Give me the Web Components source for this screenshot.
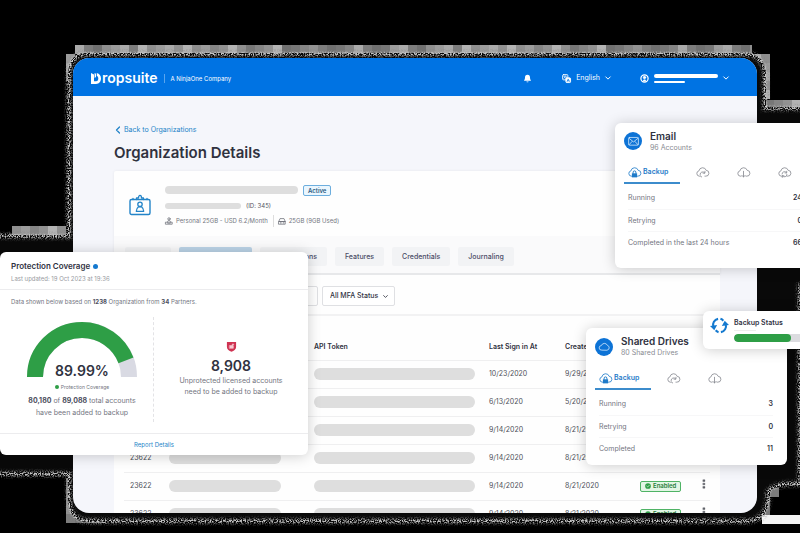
<!DOCTYPE html>
<html lang="en">
<head>
<meta charset="utf-8">
<meta name="viewport" content="width=device-width, initial-scale=1">
<title>Dropsuite – Organization Details</title>
<style>
:root{--blue:#0073e3;--link:#2384c8;--ink:#30323f;--muted:#74767f;--line:#ececee;--bar:#dedede;--green:#2e9e46}
html,body{margin:0;height:100%}
body{background:#000;position:relative;overflow:hidden;font-family:Inter,"Liberation Sans",sans-serif;font-size:7px;line-height:12px;color:var(--ink)}
</style>
</head>
<body>
<ds-desktop>
  <ds-backdrop slot="backdrop"></ds-backdrop>
  <ds-window>
    <ds-header slot="header"></ds-header>
    <ds-page-title slot="title">Organization Details</ds-page-title>
    <ds-summary></ds-summary>
    <ds-filters></ds-filters>
    <ds-accounts></ds-accounts>
  </ds-window>
  <ds-coverage slot="left"></ds-coverage>
  <ds-metrics slot="email" icon="mail" heading="Email" tabs="retry,down,sync" rows="Running:24|Retrying:0|Completed in the last 24 hours:66" spaced>96 Accounts</ds-metrics>
  <ds-metrics slot="drives" icon="cloud" heading="Shared Drives" tabs="retry,down" rows="Running:3|Retrying:0|Completed:11">80 Shared Drives</ds-metrics>
  <ds-status slot="status">Backup Status</ds-status>
</ds-desktop>

<script>
const cloudPath = '<path d="M5 12.5H4a3.3 3.3 0 0 1-.4-6.5A4.6 4.6 0 0 1 12.500 5.300 3.600 3.600 0 0 1 12 12.500h-1"/>';
const icons = {
  chevron: ['0 0 8 8', '<path d="M1 2.500 4 5.500 7 2.500" stroke-width="1.300"/>'],
  back: ['0 0 8 8', '<path d="M5.500 1 2.500 4 5.500 7" stroke-width="1.300"/>'],
  bell: ['0 0 10 10', '<path d="M5 .8c-2 0-2.800 1.500-2.800 3.200 0 1.800-.4 2.400-1.200 3.500h8c-.8-1.100-1.200-1.700-1.200-3.500C7.800 2.300 7 .8 5 .8zM3.900 8.200h2.200c0 1.400-2.200 1.400-2.200 0z" fill="currentColor" stroke="none"/>'],
  lang: ['0 0 10 10', '<rect x=".7" y=".7" width="5.800" height="5.800" rx="1"/><path d="M2 2.500h3M3.500 2v.5c0 1-.7 2-1.500 2.500M2.700 3.700l2 1.300" stroke-width=".7"/><rect x="4.300" y="4.300" width="5.200" height="5.200" rx="1" fill="currentColor"/><path d="m5.700 8.300 1.200-2.800 1.200 2.800M6.200 7.500h1.500" stroke="#0073e3" stroke-width=".7"/>'],
  user: ['0 0 10 10', '<circle cx="5" cy="5" r="4" stroke-width="1.400"/><circle cx="5" cy="3.900" r="1.300" fill="currentColor"/><path d="M3.500 8.200V7.300c0-1.600 3-1.600 3 0v.9z" fill="currentColor" stroke="none"/>'],
  badge: ['0 0 22 22', '<rect x="1" y="5.500" width="20" height="15" rx="1.500" stroke-width="1.400"/><path d="M7.500 5.500V4h2c0-3.500 3-3.500 3 0h2v1.500M4 5.500V4.300M18 5.500V4.300" stroke-width="1.300"/><circle cx="11" cy="10.300" r="2.200" stroke-width="1.300"/><path d="M7.300 17.300c0-2.500 1.200-3.700 2.200-4.500h3c1 .8 2.200 2 2.200 4.500z" stroke-width="1.300"/>'],
  plan: ['0 0 10 10', '<circle cx="5" cy="2.400" r="1.500"/><path d="M3.200 6.500c0-3.500 3.600-3.500 3.600 0M1 6.500h8V9H1zM3.500 7.800h3"/>'],
  disk: ['0 0 10 10', '<path d="M1 5.500 2.500 2h5L9 5.500V9H1z"/><path d="M1 5.500h8" stroke-width="1.300"/><path d="M3 7.400h1M6.500 7.400h.8" stroke-width="1.200"/>'],
  lock: ['0 0 16 16', cloudPath + '<path d="M4.800 9h6.400v5H4.800z" fill="currentColor" stroke="none"/><path d="M6.300 9V7.500c0-2 3.400-2 3.400 0V9" stroke-width="1.200"/>'],
  retry: ['0 0 16 16', cloudPath + '<path d="M5 10.500a3.200 3.200 0 0 1 5.800-1.900M11 6.500v2.300H8.700M5.500 12.300 7 13.500"/>'],
  down: ['0 0 16 16', cloudPath + '<path d="M8 6.500v7M6 11.500l2 2 2-2"/>'],
  sync: ['0 0 16 16', cloudPath + '<path d="M5 9.800a3 3 0 0 1 5.500-1.500M10.700 6.500v2H8.700M11 10.500a3 3 0 0 1-5.500 1.500M5.300 14v-2h2"/>'],
  mail: ['0 0 16 16', '<rect x="2" y="3" width="12" height="9.500" rx="1"/><path d="m2.500 4 5.500 4.500L13.500 4M2.500 12l3.700-4M13.500 12 9.800 8"/>'],
  cloud: ['0 0 16 16', '<path d="M4.300 12.500a2.800 2.800 0 0 1-.2-5.600A4 4 0 0 1 11.600 6.700 3 3 0 0 1 11.500 12.500z"/>'],
  cycle: ['0 0 20 18', '<path d="M8.500 2A6.600 6.600 0 0 0 3.500 10.500M11.500 16A6.600 6.600 0 0 0 16.500 7.500M6 14a6.500 6.500 0 0 0 3 2M14 4a6.500 6.500 0 0 0-3-2" stroke-width="2.200" stroke-linecap="butt"/><path d="M0 9.500 7.500 8.500 4.500 14zM20 8.500 12.500 9.500 15.500 4z" fill="currentColor" stroke="none"/>'],
  shield: ['0 0 10 12', '<path d="M0 1h10v5.500C10 9.300 7.500 10.500 5 11.700 2.500 10.500 0 9.300 0 6.500z" fill="#cf3352" stroke="none"/><path d="M3 5h4v3H3zM5.700 5V4c0-1 1.700-1.300 1.900 0" fill="#f7c9d2" stroke="#f7c9d2" stroke-width=".6"/>'],
  check: ['0 0 8 8', '<circle cx="4" cy="4" r="3.800" fill="#2e9e46" stroke="none"/><path d="M2.300 4.100 3.600 5.300 5.800 2.900" stroke="#fff" stroke-width=".8"/>'],
  dots: ['0 0 4 12', '<path d="M1 1h2v2H1zM1 5h2v2H1zM1 9h2v2H1z" fill="currentColor" stroke="currentColor" stroke-width=".5"/>']
};
const base = `*,:host{box-sizing:border-box}
button,select{font:inherit;color:inherit;margin:0;padding:0;border:0;background:none;cursor:pointer}
a{color:inherit;text-decoration:none}h1,h2,p{margin:0;font-size:inherit;font-weight:inherit}`;

function define(name, css, html) {
  customElements.define(name, class extends HTMLElement {
    constructor() {
      super();
      const t = document.createElement('template');
      t.innerHTML = `<style>${base}${css}</style>` + (typeof html === 'function' ? html(this) : html);
      this.attachShadow({mode: 'open'}).append(t.content.cloneNode(true));
    }
  });
}

define('ds-icon', `:host{display:inline-block;flex:none;width:var(--size,8px);height:var(--size,8px)}
svg{display:block;width:100%;height:100%;fill:none;stroke:currentColor;stroke-linecap:round;stroke-linejoin:round;overflow:visible}`,
  el => { const [box, body] = icons[el.getAttribute('name')]; return `<svg viewBox="${box}" aria-hidden="true">${body}</svg>`; });

define('ds-desktop', `:host{display:block;height:100%}
slot{display:block}
.main{padding:58px 43px 20px 73px;height:100%;position:relative}
.float{position:absolute}
.left{left:0;top:252px;width:308px}
.email{right:-16px;top:123px;width:201px}
.drives{right:13px;top:328px;width:201px}
.status{right:-22px;top:311px;width:119px}`,
  `<slot name="backdrop"></slot><div class="main"><slot style="height:100%"></slot></div>
<slot name="left" class="float left"></slot><slot name="email" class="float email"></slot>
<slot name="drives" class="float drives"></slot><slot name="status" class="float status"></slot>`);

define('ds-backdrop', `:host{display:block;position:absolute;inset:0}svg{display:block;width:100%;height:100%}`, () => {
  const shades = ['#aaa','#858585','#9c9c9c','#777','#8f8f8f','#707070','#b3b3b3','#7d7d7d','#929292'];
  let blocks = '', n = 0;
  const run = (x, y, w, h) => {
    for (let i = x; i < x + w; i += 9) for (let j = y; j < y + h; j += 9)
      blocks += `<rect x="${i}" y="${j}" width="${Math.min(9, x + w - i)}" height="${Math.min(9, y + h - j)}" fill="${shades[(n++ * 7 + (n >> 2)) % 9]}"/>`;
  };
  run(75, 45, 677, 9); run(66, 54, 9, 27); run(752, 54, 18, 9); run(761, 63, 9, 36);
  run(12, 226, 54, 9); run(765, 100, 35, 8); run(66, 478, 9, 45); run(75, 514, 30, 9);
  run(770, 488, 9, 9); run(761, 497, 9, 18);
  const d = 'M86 54H744Q764 54 765 74V108H820V286H800V484Q775 482 768 492V500Q766 521 746 521H88Q70 521 69 499V474H-10V236H69V74Q70 54 86 54Z';
  return `<svg viewBox="0 0 800 533" preserveAspectRatio="none" aria-hidden="true">
<defs><filter id="grain" x="0" y="0" width="800" height="533" filterUnits="userSpaceOnUse">
<feTurbulence type="fractalNoise" baseFrequency=".75" numOctaves="2" seed="4" result="n"/>
<feColorMatrix in="n" values="0 0 0 0 1  0 0 0 0 1  0 0 0 0 1  5 0 0 0 -2.100" result="s"/>
<feGaussianBlur in="SourceGraphic" stdDeviation="1"/><feComposite in2="s" operator="in"/></filter></defs>
${blocks}<rect x="762" y="515" width="38" height="9" fill="#f4f4f4"/>
<path d="${d}" fill="#090909" stroke="#090909" stroke-width="2"/>
<path d="${d}" fill="none" stroke="#777" stroke-opacity=".5" stroke-width="8" filter="url(#grain)"/>
<path d="${d}" fill="none" stroke="#eee" stroke-width="3" filter="url(#grain)"/></svg>`;
});

define('ds-window', `:host{display:flex;flex-direction:column;height:100%;overflow:hidden;background:#f5f6fb;border-radius:16px}
main{padding:27px 37px 0 41px;flex:1;min-height:0}
.back{display:flex;align-items:center;gap:2px;width:max-content;height:14px;color:var(--link);--size:8px}
`, `<slot name="header"></slot><main><a class="back" href="#"><ds-icon name="back"></ds-icon>Back to Organizations</a>
<slot name="title"></slot><slot></slot></main>`);

define('ds-page-title', `:host{display:block;margin:6px 0 8px}h1{font-size:15px;line-height:20px;font-weight:600}`, `<h1><slot></slot></h1>`);

define('ds-header', `:host{display:block;flex:none;background:var(--blue);color:#fff}
header{display:flex;align-items:center;height:38px;padding:2px 28px 0 18px}
.logo{display:flex;align-items:center;font-size:14px;line-height:18px;font-weight:600}
.logo svg{width:10px;height:11px;display:block;margin-right:1px}
.tag{font-size:6px;border-left:1px solid #5aa5ee;margin-left:6px;padding-left:6px;line-height:9px}
.right{margin-left:auto;display:flex;align-items:center}
button{display:flex;align-items:center}
.bell{--size:9px;margin-right:30px}.lang{gap:5px;margin-right:29px}.lang ds-icon:first-child{--size:9px}
.user{gap:5px}.user ds-icon:first-child{--size:9px}
.bars{display:grid;gap:3px;width:64px}.bars i{height:4px;border-radius:2px;background:#fff}.bars i+i{height:2px;width:31px}
.lang .end,.user .end{--size:6px}`,
`<header><a class="logo" href="#" aria-label="Dropsuite"><svg viewBox="0 0 10 11" aria-hidden="true"><path d="M0 0 3 1.500V8.300H5C6.700 8.300 7.300 7 7.300 5.500 7.300 4 6.700 3.200 5.800 2.900V0C8.500.6 10 2.800 10 5.500S8.300 11 5 11H0Z" fill="#fff"/><path d="M3.600 0 5 .8V4L3.600 5Z" fill="#fff"/></svg>ropsuite</a><span class="tag">A NinjaOne Company</span>
<div class="right"><button class="bell" aria-label="Notifications"><ds-icon name="bell"></ds-icon></button>
<button class="lang"><ds-icon name="lang"></ds-icon>English<ds-icon class="end" name="chevron"></ds-icon></button>
<button class="user" aria-label="Account"><ds-icon name="user"></ds-icon><span class="bars"><i></i><i></i></span><ds-icon class="end" name="chevron"></ds-icon></button></div></header>`);

define('ds-summary', `:host{display:block;background:#fefefe;border-radius:2px 2px 0 0;box-shadow:0 0 3px #0001;border-bottom:2px solid #e7e8ea}
.info{display:flex;padding:11px 15px 0;gap:14px;height:65px}
.info>ds-icon{--size:22px;color:var(--link);margin-top:12px}
.lines{display:grid;grid-template-rows:16px 15px 15px;align-items:center;align-content:start}
.lines div{display:flex;align-items:center;gap:5px}
.bar{width:133px;height:8px;border-radius:4px;background:var(--bar)}.bar.s{width:76px;height:6px}
.active{border:1px solid #6daede;border-radius:2px;background:#eaf6fe;color:#28587f;font-size:6px;font-weight:600;line-height:9px;padding:0 4px}
.small{font-size:6px;color:#55575f}.lines .plan{gap:3px;color:var(--muted)}
.plan ds-icon{--size:8px}.sep{border-left:1px solid #ddd;padding-left:4px;margin-left:2px;display:flex;gap:3px;align-items:center}
nav{display:flex;gap:8px;padding:11px 11px 7px;background:#fafafb}
nav button{height:19px;padding:0 10px;background:#f2f3f5;border-radius:2px;font-weight:500;color:#4b4c66}
nav .a{width:46px}nav .b{width:73px;background:#bcd4e8}nav .c{width:67px;text-align:right;padding-right:10px}`,
`<div class="info"><ds-icon name="badge"></ds-icon><div class="lines">
<div><i class="bar"></i><span class="active">Active</span></div>
<div><i class="bar s"></i><span class="small">(ID: 345)</span></div>
<div class="small plan"><ds-icon name="plan"></ds-icon>Personal 25GB - USD 6.2/Month<span class="sep"><ds-icon name="disk"></ds-icon>25GB (9GB Used)</span></div></div></div>
<nav><button class="a" aria-label="Overview"></button><button class="b" aria-label="Accounts"></button><button class="c">Integrations</button><button>Features</button><button>Credentials</button><button>Journaling</button></nav>`);

define('ds-filters', `:host{display:flex;justify-content:flex-start;gap:4px;background:#fefefe;padding:11px 10px 8px;border-bottom:2px solid #f2f2f3}
label{position:relative;display:block;--size:5px}
select{appearance:none;display:block;height:20px;width:73px;border:1px solid #dfe0e3;border-radius:2px;padding:0 7px;background:#fff;font-weight:500}
.a select{width:194px}
label ds-icon{position:absolute;right:7px;top:8px;pointer-events:none}`,
`<label class="a"><select aria-label="Account status"></select></label><label><select aria-label="MFA status"><option>All MFA Status</option></select><ds-icon name="chevron"></ds-icon></label>`);

define('ds-accounts', `:host{display:block;background:#fefefe;padding:19px 10px 0}
table{border-collapse:collapse;table-layout:fixed;width:100%}
th,td{padding:0;text-align:left;border-bottom:1px solid #efeff0;height:28px;color:#4d4f58;vertical-align:middle}
th{height:25px;font-weight:600;color:var(--ink)}
th:first-child,td:first-child{padding-left:6px}
.p{display:block;height:12px;border-radius:6px;background:var(--bar);width:112px}.w{width:161px}
.on{display:inline-flex;align-items:center;gap:2px;border:1px solid #4fb365;background:#e2f6e5;border-radius:2px;padding:0 4px;height:11px;color:#287c3b;font-size:6px;font-weight:600;vertical-align:middle}
.on ds-icon{--size:6px}button{display:block;--size:10px}`,
() => `<table><colgroup><col style="width:45px"><col style="width:145px"><col style="width:175px"><col style="width:76px"><col style="width:75px"><col style="width:59px"><col></colgroup>
<thead><tr><th></th><th></th><th>API Token</th><th>Last Sign in At</th><th>Created At</th><th></th><th></th></tr></thead><tbody>` +
[['','10/23/2020','9/29/2020'],['','6/13/2020','5/20/2020'],['','9/14/2020','8/21/2020'],['23622','9/14/2020','8/21/2020'],['23622','9/14/2020','8/21/2020'],['23622','9/14/2020','8/21/2020']].map(([id, a, b], i) =>
`<tr><td>${id}</td><td><i class="p"></i></td><td><i class="p w"></i></td><td>${a}</td><td>${b}</td><td>${i > 3 ? '<span class="on"><ds-icon name="check"></ds-icon>Enabled</span>' : ''}</td><td><button aria-label="More"><ds-icon name="dots"></ds-icon></button></td></tr>`).join('') + `</tbody></table>`);

const card = `:host{display:block;background:#fff;border-radius:6px;box-shadow:0 1px 14px #0003}`;

define('ds-coverage', `${card}
header{padding:8px 11px 4px;border-bottom:1px solid var(--line)}
h2{font-size:8px;font-weight:600;display:flex;align-items:center;gap:3px;line-height:13px}
h2 i{width:5px;height:5px;border-radius:50%;background:#1479cf}
.upd{font-size:6px;color:#999ba2}
.note{font-size:6px;color:var(--muted);padding:6px 11px 0}
b{font-weight:700;color:#4d4f60}
.cols{display:grid;grid-template-columns:1fr 1fr;padding-top:9px;height:125px;text-align:center;color:var(--muted)}
.cols>div{display:flex;flex-direction:column;align-items:center}
.l{border-right:1px dashed #e3e3e6;padding:4px 0 0 11px;margin-bottom:11px}
.gauge{display:grid;place-items:end center;width:112px;height:56px}.gauge>*{grid-area:1/1}.gauge svg{width:112px;height:56px;display:block}
.num{font-size:14px;font-weight:600;line-height:16px;color:var(--ink)}.gauge .num{line-height:12px}
.leg{font-size:5px;line-height:8px;display:flex;align-items:center;gap:2px;margin:6px 0 4px}.leg i{width:4px;height:4px;border-radius:50%;background:var(--green)}
.r{padding-top:24px}.r ds-icon{--size:11px;margin-bottom:6px}
.r p{line-height:11px;margin-top:1px}
footer{border-top:1px solid var(--line);text-align:center;font-size:6px;line-height:21px;color:var(--link)}`,
`<header><h2>Protection Coverage<i></i></h2><p class="upd">Last updated: 19 Oct 2023 at 19:36</p></header>
<p class="note">Data shown below based on <b>1238</b> Organization from <b>34</b> Partners.</p>
<div class="cols"><div class="l"><div class="gauge"><svg viewBox="0 0 112 56" aria-hidden="true"><g fill="none" stroke-width="16"><path d="M9 56a47 47 0 0 1 94 0" stroke="#d9dae3"/><path d="M9 56a47 47 0 0 1 94 0" stroke="#2e9e46" pathLength="100" stroke-dasharray="88.500 100"/></g></svg><span class="num">89.99%</span></div>
<span class="leg"><i></i>Protection Coverage</span><p><b>80,180</b> of <b>89,088</b> total accounts<br>have been added to backup</p></div>
<div class="r"><ds-icon name="shield"></ds-icon><span class="num">8,908</span><p>Unprotected licensed accounts<br>need to be added to backup</p></div></div>
<footer><a href="#">Report Details</a></footer>`);

define('ds-metrics', `${card}:host{padding:6px 9px 6px}:host([spaced]){padding-bottom:15px}
header{display:flex;gap:8px;align-items:center;height:25px}:host([spaced]) header{height:24px}
.ico{width:18px;height:18px;border-radius:50%;background:#0d73d6;color:#cfe6fb;display:grid;place-items:center;--size:13px}
h2{font-size:10px;line-height:13px;font-weight:600}header p{color:#898b92;line-height:10px}
nav{display:flex;padding-top:9px;gap:3px;--size:13px;color:#85878f}
nav button{display:flex;align-items:center;justify-content:center;gap:2px;width:38px;height:22px;border-bottom:2px solid transparent}
nav .on{width:56px;justify-content:flex-start;padding-left:4px;color:#1f7bc9;font-weight:600;border-color:#3c8ccc}
dl{margin:3px 0 0;padding:0 5px 0 4px}dl div{display:flex;justify-content:space-between;height:22px;line-height:22px}
dl div+div{border-top:1px solid #f7f7f8}
dt{color:var(--muted)}dd{margin:0;font-weight:600}`,
el => `<header><span class="ico"><ds-icon name="${el.getAttribute('icon')}"></ds-icon></span><div><h2>${el.getAttribute('heading')}</h2><p><slot></slot></p></div></header>
<nav><button class="on"><ds-icon name="lock"></ds-icon>Backup</button>${el.getAttribute('tabs').split(',').map(t => `<button aria-label="${t}"><ds-icon name="${t}"></ds-icon></button>`).join('')}</nav>
<dl>${el.getAttribute('rows').split('|').map(r => r.split(':')).map(([k, v]) => `<div><dt>${k}</dt><dd>${v}</dd></div>`).join('')}</dl>`);

define('ds-status', `${card}:host{display:flex;gap:5px;padding:6px 7px 7px;height:38px}
ds-icon{--size:19px;color:#1479cf;margin-top:-1px}
.c{flex:1}h2{font-weight:600;line-height:12px}
.hint{display:block;width:22px;height:1px;margin:1px 0 3px;background:#eee}
.track{height:8px;border-radius:4px;background:#dcdce0;overflow:hidden}.track i{display:block;height:100%;width:70%;border-radius:4px;background:var(--green)}`,
`<ds-icon name="cycle"></ds-icon><div class="c"><h2><slot></slot></h2><span class="hint"></span><div class="track" role="progressbar" aria-label="Backup progress" aria-valuenow="70"><i></i></div></div>`);
</script>
</body>
</html>
